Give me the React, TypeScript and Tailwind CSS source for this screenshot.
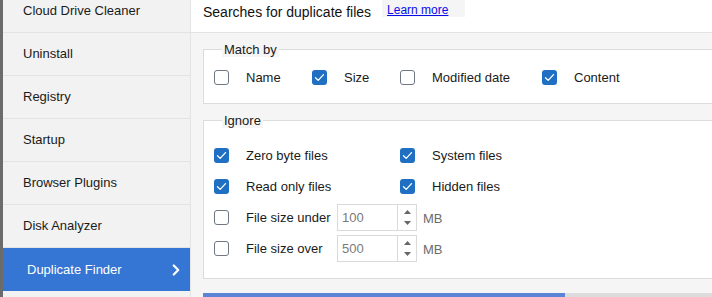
import { ChevronRight } from "lucide-react"

const navItems = [
  "Cloud Drive Cleaner",
  "Uninstall",
  "Registry",
  "Startup",
  "Browser Plugins",
  "Disk Analyzer",
]

function Checkbox({ checked }: { checked?: boolean }) {
  if (checked) {
    return (
      <span className="flex h-[15px] w-[15px] shrink-0 items-center justify-center rounded-[3px] bg-[#1f6fc2]">
        <svg width="11" height="11" viewBox="0 0 11 11" fill="none">
          <path d="M1.5 5.8 L4.2 8.4 L9.5 2.6" stroke="white" strokeWidth="1.3" strokeLinecap="round" strokeLinejoin="round" />
        </svg>
      </span>
    )
  }
  return <span className="h-[15px] w-[15px] shrink-0 rounded-[3px] border border-[#6f7782] bg-white" />
}

function Option({ label, checked }: { label: string; checked?: boolean }) {
  return (
    <div className="flex h-[15px] items-center gap-[17px] leading-[15px]">
      <Checkbox checked={checked} />
      <span>{label}</span>
    </div>
  )
}

function SizeRow({ label, value }: { label: string; value: string }) {
  return (
    <div className="flex h-[27px] items-center">
      <div className="w-[123px]">
        <Option label={label} />
      </div>
      <div className="flex h-[27px] w-[80px] border border-[#dadada] bg-white">
        <div className="flex-1 pl-[4px] pt-[3px] text-[#7a7a7a]">{value}</div>
        <div className="flex w-[19px] flex-col items-center justify-center gap-[7px] border-l border-[#dadada]">
          <svg width="7" height="4" viewBox="0 0 7 4"><path d="M3.5 0 L7 4 L0 4 Z" fill="#666" /></svg>
          <svg width="7" height="4" viewBox="0 0 7 4"><path d="M0 0 L7 0 L3.5 4 Z" fill="#666" /></svg>
        </div>
      </div>
      <span className="ml-[6px] mt-[3px] text-[#6b6b6b]">MB</span>
    </div>
  )
}

export default function App() {
  return (
    <div
      className="flex h-[297px] w-[712px] overflow-hidden bg-white text-[13px] text-[#1a1a1a]"
      style={{ fontFamily: '"Liberation Sans", Arial, sans-serif' }}
    >
      <div className="w-[3px] shrink-0 bg-[#6b6b6b]" />

      <nav className="flex w-[188px] shrink-0 flex-col border-r border-[#e4e4e4] bg-[#f2f2f2]">
        <div className="-mt-[10px] flex flex-col">
          {navItems.map((item) => (
            <div key={item} className="flex h-[43px] items-center border-b border-[#e3e3e3] pl-[20px]">
              {item}
            </div>
          ))}
          <div className="flex h-[43px] items-center justify-between bg-[#3575d3] pl-[24px] pr-[5px] text-white">
            <span>Duplicate Finder</span>
            <ChevronRight size={18} strokeWidth={3} />
          </div>
        </div>
      </nav>

      <main className="flex min-w-0 flex-1 flex-col overflow-hidden bg-[#f5f5f5]">
        <header className="flex h-[33px] shrink-0 items-start border-b border-[#e3e3e3] bg-white pl-[12px]">
          <h1 className="mt-[4px] text-[14px] leading-[17px] text-[#111]">Searches for duplicate files</h1>
          <div className="ml-[11px] h-[17px] bg-[#f5f5f5] pl-[5px] pr-[17px]">
            <a href="#" className="text-[12px] leading-[16px] text-[#0b0bea] underline">
              Learn more
            </a>
          </div>
        </header>

        <div className="flex flex-col pl-[12px] pt-[9px]">
          <fieldset className="w-[540px] border border-[#dcdcdc] bg-white pb-[18px] pl-[10px]">
            <legend className="ml-[8px] bg-[#f5f5f5] px-[2px] leading-[15px]">Match by</legend>
            <div className="mt-[13px] grid grid-cols-[98px_88px_142px_auto] items-center">
              <Option label="Name" />
              <Option label="Size" checked />
              <Option label="Modified date" />
              <Option label="Content" checked />
            </div>
          </fieldset>

          <fieldset className="mt-[9px] w-[540px] border border-[#dcdcdc] bg-white pb-[16px] pl-[10px]">
            <legend className="ml-[8px] bg-[#f5f5f5] px-[2px] leading-[15px]">Ignore</legend>
            <div className="mt-[20px] grid grid-cols-[186px_auto] gap-y-[16px]">
              <Option label="Zero byte files" checked />
              <Option label="System files" checked />
              <Option label="Read only files" checked />
              <Option label="Hidden files" checked />
            </div>
            <div className="mt-[10px] flex flex-col gap-[4px]">
              <SizeRow label="File size under" value="100" />
              <SizeRow label="File size over" value="500" />
            </div>
          </fieldset>

          <div className="mt-[14px] flex h-[5px] w-[520px] shrink-0">
            <div className="w-[362px] bg-[#5b84d6]" />
            <div className="flex-1 bg-[#dcdcdc]" />
          </div>
        </div>
      </main>
    </div>
  )
}
